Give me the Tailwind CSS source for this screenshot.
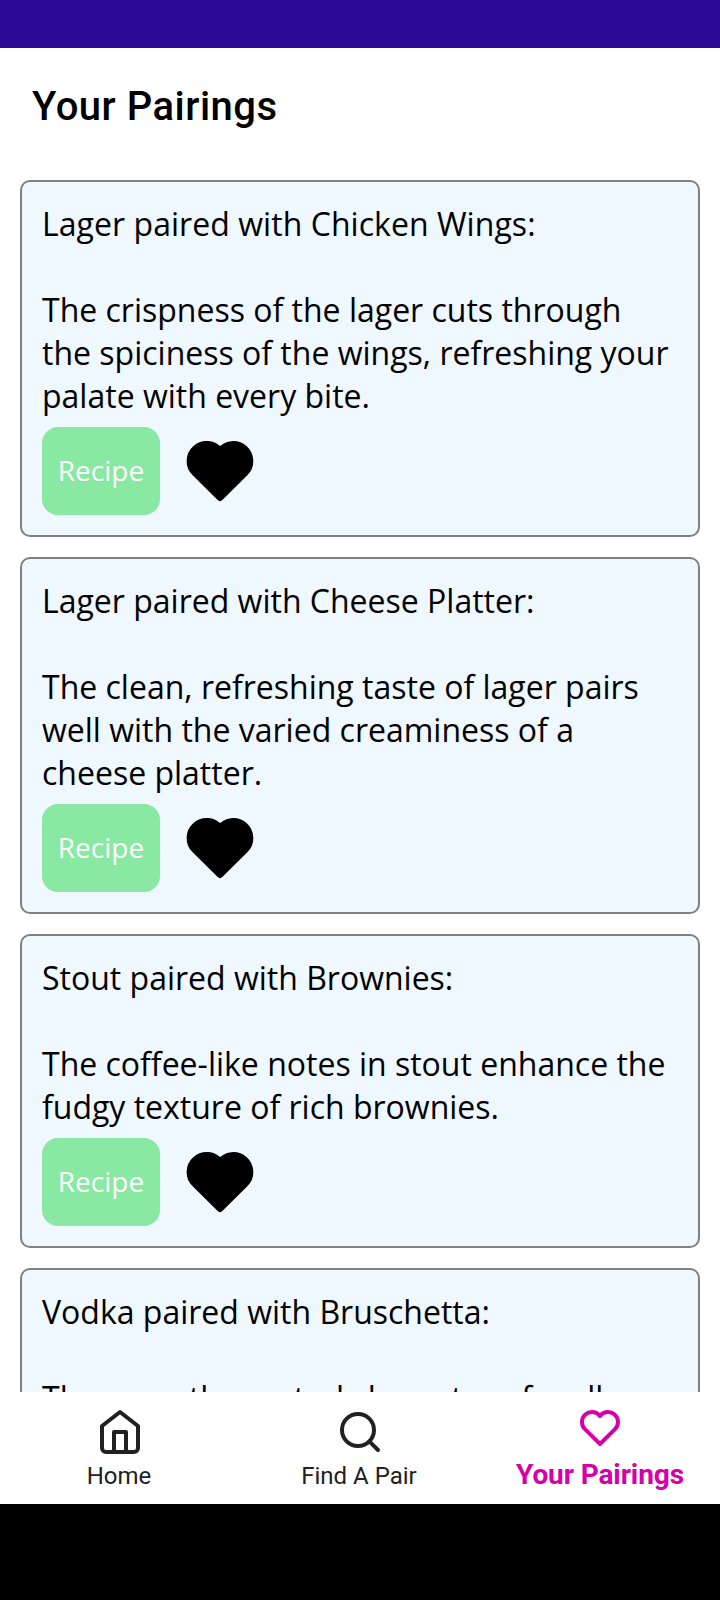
<!DOCTYPE html>
<html lang="en">
<head>
<meta charset="utf-8">
<title>Your Pairings</title>
<script src="https://cdn.jsdelivr.net/npm/@tailwindcss/browser@4"></script>
</head>
<body class="bg-white">
<svg class="hidden">
  <symbol id="heart" viewBox="0 0 24 24"><path d="M19.5 12.572l-7.5 7.428l-7.5-7.428a5 5 0 1 1 7.5-6.566a5 5 0 1 1 7.5 6.572"/></symbol>
</svg>
<div class="flex h-[1600px] w-[720px] flex-col overflow-hidden bg-white font-['Open_Sans',sans-serif] text-black">
  <div class="h-12 shrink-0 bg-[#2b0a96]"></div>
  <header class="flex h-[116px] shrink-0 items-center px-8 pt-0.5">
    <h1 class="font-[Roboto,sans-serif] text-[40px] leading-[48px] font-medium tracking-[0.5px]">Your Pairings</h1>
  </header>
  <main class="flex min-h-0 flex-1 flex-col gap-5 overflow-hidden px-5 pt-4 text-[32px] leading-[43px]">
    <article class="shrink-0 rounded-[10px] border-2 border-[#808080] bg-[#eff7ff] p-5">
      <h2 class="tracking-[0.05px]">Lager paired with Chicken Wings:</h2>
      <p class="mt-[43px]">The crispness of the lager cuts through<br>the spiciness of the wings, refreshing your<br>palate with every bite.</p>
      <div class="mt-2.5 flex h-22 items-center gap-5">
        <button class="h-22 w-[118px] rounded-2xl bg-[#89e8a1] pb-0.5 text-[28px] leading-[38px] text-white">Recipe</button>
        <svg class="size-20 fill-black stroke-black stroke-2" stroke-linecap="round" stroke-linejoin="round"><use href="#heart"/></svg>
      </div>
    </article>
    <article class="shrink-0 rounded-[10px] border-2 border-[#808080] bg-[#eff7ff] p-5">
      <h2>Lager paired with Cheese Platter:</h2>
      <p class="mt-[43px]">The clean, refreshing taste of lager pairs<br>well with the varied creaminess of a<br>cheese platter.</p>
      <div class="mt-2.5 flex h-22 items-center gap-5">
        <button class="h-22 w-[118px] rounded-2xl bg-[#89e8a1] pb-0.5 text-[28px] leading-[38px] text-white">Recipe</button>
        <svg class="size-20 fill-black stroke-black stroke-2" stroke-linecap="round" stroke-linejoin="round"><use href="#heart"/></svg>
      </div>
    </article>
    <article class="shrink-0 rounded-[10px] border-2 border-[#808080] bg-[#eff7ff] p-5">
      <h2>Stout paired with Brownies:</h2>
      <p class="mt-[43px]">The coffee-like notes in stout enhance the<br>fudgy texture of rich brownies.</p>
      <div class="mt-2.5 flex h-22 items-center gap-5">
        <button class="h-22 w-[118px] rounded-2xl bg-[#89e8a1] pb-0.5 text-[28px] leading-[38px] text-white">Recipe</button>
        <svg class="size-20 fill-black stroke-black stroke-2" stroke-linecap="round" stroke-linejoin="round"><use href="#heart"/></svg>
      </div>
    </article>
    <article class="shrink-0 rounded-[10px] border-2 border-[#808080] bg-[#eff7ff] p-5">
      <h2>Vodka paired with Bruschetta:</h2>
      <p class="mt-[43px]">The smooth, neutral character of vodka</p>
    </article>
  </main>
  <nav class="grid h-28 shrink-0 grid-cols-3 bg-white font-[Roboto,sans-serif] text-[#212121]">
    <a class="flex flex-col items-center pt-4">
      <svg class="size-12" viewBox="0 0 24 24" fill="none" stroke="currentColor" stroke-width="2" stroke-linecap="round" stroke-linejoin="round"><path d="M3 9l9-7 9 7v11a2 2 0 0 1-2 2H5a2 2 0 0 1-2-2z"/><path d="M9 22V12h6v10"/></svg>
      <span class="mt-1.5 mr-0.5 text-2xl leading-7">Home</span>
    </a>
    <a class="flex flex-col items-center pt-4">
      <svg class="size-12" viewBox="0 0 24 24" fill="none" stroke="currentColor" stroke-width="2" stroke-linecap="round" stroke-linejoin="round"><circle cx="11" cy="11" r="8"/><path d="M21 21l-4.35-4.35"/></svg>
      <span class="mt-1.5 mr-0.5 text-2xl leading-7">Find A Pair</span>
    </a>
    <a class="flex flex-col items-center pt-3 text-[#d600a9]">
      <svg class="size-12 fill-none stroke-current stroke-2" stroke-linecap="round" stroke-linejoin="round"><use href="#heart"/></svg>
      <span class="mt-[7px] text-[28px] leading-8 font-bold tracking-[-0.1px]">Your Pairings</span>
    </a>
  </nav>
  <div class="h-24 shrink-0 bg-black"></div>
</div>
</body>
</html>
